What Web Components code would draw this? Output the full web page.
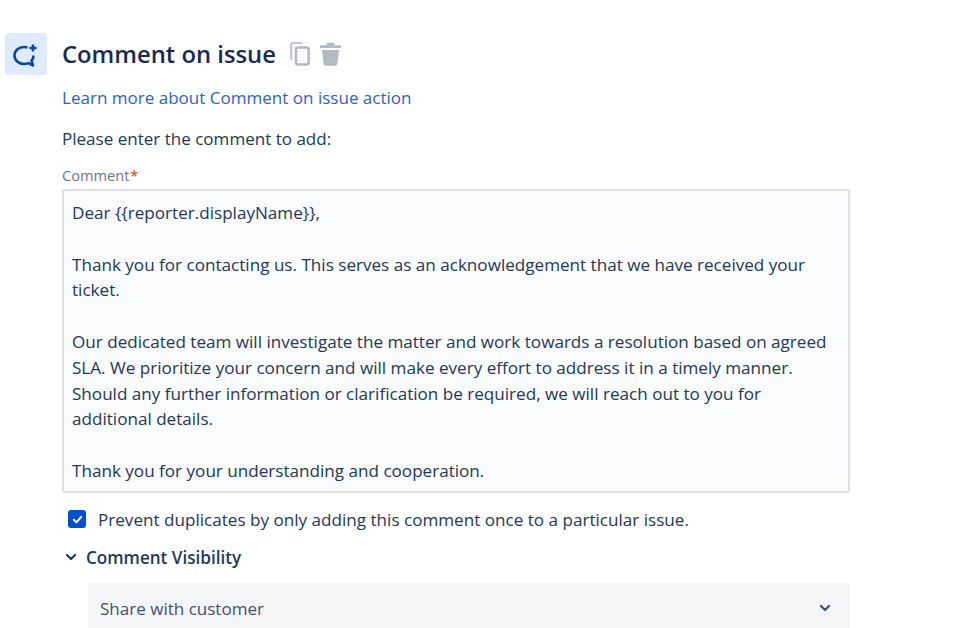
<!DOCTYPE html>
<html>
<head>
<meta charset="utf-8">
<style>
  html, body { margin: 0; height: 100%; overflow: hidden; background: #fff; }
  body { font-family: "Open Sans", "Noto Sans", sans-serif; color: #253858; }
</style>
</head>
<body>
<rule-editor>
  <rule-header slot="header" title="Comment on issue"></rule-header>
  <a slot="learn" href="#">Learn more about Comment on issue action</a>
  <span slot="prompt">Please enter the comment to add:</span>
  <comment-field slot="field" label="Comment">Dear {{reporter.displayName}},

Thank you for contacting us. This serves as an acknowledgement that we have received your
ticket.

Our dedicated team will investigate the matter and work towards a resolution based on agreed
SLA. We prioritize your concern and will make every effort to address it in a timely manner.
Should any further information or clarification be required, we will reach out to you for
additional details.

Thank you for your understanding and cooperation.</comment-field>
  <check-row slot="check">Prevent duplicates by only adding this comment once to a particular issue.</check-row>
  <visibility-section slot="visibility" heading="Comment Visibility" value="Share with customer"></visibility-section>
</rule-editor>
<script>
class RuleEditor extends HTMLElement {
  constructor() {
    super();
    this.attachShadow({ mode: "open" });
    this.shadowRoot.innerHTML = /*html*/ `
      <style>
        :host { display: block; width: 965px; height: 628px; padding: 33px 0 0 5px; box-sizing: border-box; font-size: 17.05px; }
        .body { margin: 0 0 0 57px; width: 788px; }
        .learn { margin-top: 11px; line-height: 24px; height: 24px; }
        ::slotted(a) { color: #2f5fd0; text-decoration: none; }
        .prompt { margin-top: 17px; line-height: 24px; height: 24px; color: #253858; }
      </style>
      <slot name="header"></slot>
      <div class="body">
        <div class="learn"><slot name="learn"></slot></div>
        <div class="prompt"><slot name="prompt"></slot></div>
        <slot name="field"></slot>
        <slot name="check"></slot>
        <slot name="visibility"></slot>
      </div>
    `;
  }
}
class RuleHeader extends HTMLElement {
  constructor() {
    super();
    this.attachShadow({ mode: "open" });
    this.shadowRoot.innerHTML = /*html*/ `
      <style>
        :host { display: flex; align-items: center; height: 42px; }
        .tile { width: 42px; height: 42px; border-radius: 4px; background: #deebff; display: flex; align-items: center; justify-content: center; flex: none; }
        h1 { margin: 0 0 0 15px; font-size: 23.8px; font-weight: 600; color: #172b4d; line-height: 42px; white-space: nowrap; }
        .tools { display: flex; gap: 10px; margin-left: 14px; }
        svg { display: block; }
      </style>
      <div class="tile">
        <svg width="28" height="28" viewBox="0 0 28 28" fill="none">
          <path d="M15.5 7.4C14.5 7.1 13.3 7 12 7 6.5 7 2.5 10.8 2.5 15.5S6.5 24 12 24c1.8 0 3.2-.3 4.500-.9l4.500 2.400-1.500-4.800c1.300-1.500 2-3.200 2-5.200" stroke="#0747a6" stroke-width="2.600" stroke-linejoin="round"/>
          <path d="M21 4.500v7M17.500 8h7" stroke="#0747a6" stroke-width="2.400"/>
        </svg>
      </div>
      <h1>${this.getAttribute("title") ?? ""}</h1>
      <div class="tools">
        <svg width="20" height="24" viewBox="0 0 20 24" fill="none">
          <path d="M1.200 18V3a2 2 0 0 1 2-2h9" stroke="#c1c7d0" stroke-width="2.200"/>
          <rect x="6" y="5.500" width="12.600" height="17" rx="2" stroke="#b3bac5" stroke-width="2.600" fill="#fff"/>
        </svg>
        <svg width="21" height="24" viewBox="0 0 21 24" fill="#b3bac5">
          <path d="M7.500 .8h6a1 1 0 0 1 1 1v1.400h5.500a1 1 0 0 1 1 1V6H0V4.200a1 1 0 0 1 1-1h5.500V1.800a1 1 0 0 1 1-1z"/>
          <path d="M2 8h17l-1.600 14a2 2 0 0 1-2 1.800H5.600a2 2 0 0 1-2-1.800z"/>
        </svg>
      </div>
    `;
  }
}
class CommentField extends HTMLElement {
  constructor() {
    super();
    this.attachShadow({ mode: "open" });
    this.shadowRoot.innerHTML = /*html*/ `
      <style>
        :host { display: block; margin-top: 14px; }
        label { display: block; font-size: 14.6px; font-weight: 500; color: #6b778c; line-height: 20px; }
        label span { color: #de350b; margin-left: 1px; }
        .box { margin-top: 4px; height: 304px; box-sizing: border-box; padding: 9px 8px; background: #fafbfc; border: 2px solid #dfe1e6; border-radius: 3px; font-size: 17.1px; line-height: 25.8px; color: #253858; white-space: pre; overflow: hidden; }
      </style>
      <label>${this.getAttribute("label") ?? ""}<span>*</span></label>
      <div class="box"><slot></slot></div>
    `;
  }
}
class CheckRow extends HTMLElement {
  constructor() {
    super();
    this.attachShadow({ mode: "open" });
    this.shadowRoot.innerHTML = /*html*/ `
      <style>
        :host { display: flex; align-items: center; gap: 12px; margin: 14px 0 0 6px; height: 24px; font-size: 17.1px; color: #253858; white-space: nowrap; }
        .box { width: 18px; height: 18px; border-radius: 3px; background: #0052cc; display: flex; align-items: center; justify-content: center; flex: none; }
      </style>
      <span class="box">
        <svg width="13" height="13" viewBox="0 0 13 13" fill="none"><path d="M2.800 6.800l2.600 2.500 4.800-5.400" stroke="#fff" stroke-width="2" stroke-linecap="round" stroke-linejoin="round"/></svg>
      </span>
      <span><slot></slot></span>
    `;
  }
}
class VisibilitySection extends HTMLElement {
  constructor() {
    super();
    this.attachShadow({ mode: "open" });
    this.shadowRoot.innerHTML = /*html*/ `
      <style>
        :host { display: block; margin-top: 14px; }
        .head { display: flex; align-items: center; gap: 9px; margin-left: 3px; height: 24px; font-weight: 600; font-size: 17.1px; color: #253858; }
        .select { display: flex; align-items: center; justify-content: space-between; margin: 14px 0 0 26px; height: 50px; box-sizing: border-box; padding: 0 19px 0 12px; background: #f4f5f7; border-radius: 3px; font-size: 17.05px; color: #42526e; }
        svg { display: block; flex: none; }
      </style>
      <div class="head">
        <svg width="12" height="12" viewBox="0 0 12 12" fill="none"><path d="M2 4l4 4 4-4" stroke="#253858" stroke-width="2.200" stroke-linecap="round" stroke-linejoin="round"/></svg>
        <span>${this.getAttribute("heading") ?? ""}</span>
      </div>
      <div class="select">
        <span>${this.getAttribute("value") ?? ""}</span>
        <svg width="12" height="12" viewBox="0 0 12 12" fill="none"><path d="M2 4l4 4 4-4" stroke="#42526e" stroke-width="2.200" stroke-linecap="round" stroke-linejoin="round"/></svg>
      </div>
    `;
  }
}
customElements.define("rule-editor", RuleEditor);
customElements.define("rule-header", RuleHeader);
customElements.define("comment-field", CommentField);
customElements.define("check-row", CheckRow);
customElements.define("visibility-section", VisibilitySection);
</script>
</body>
</html>
